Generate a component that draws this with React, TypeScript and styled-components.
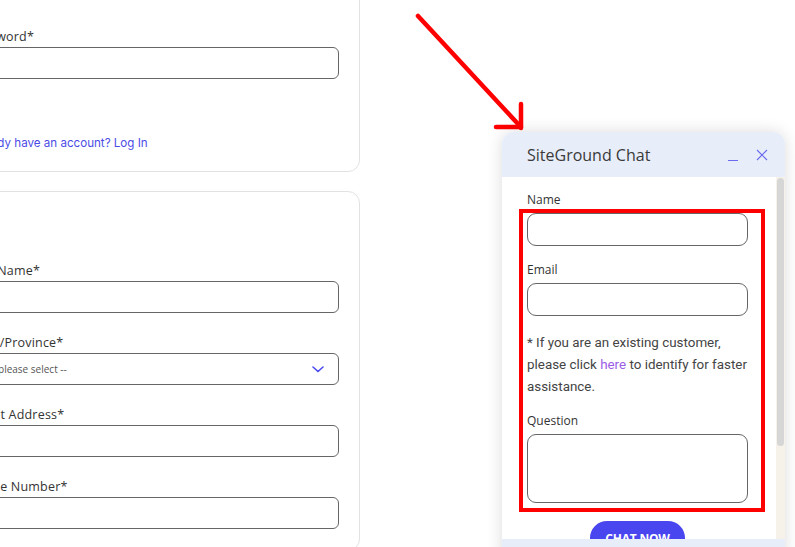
import styled, { createGlobalStyle } from 'styled-components';

const GlobalStyle = createGlobalStyle`
  html, body {
    margin: 0;
    padding: 0;
    background: #fff;
    overflow: hidden;
  }
  * {
    box-sizing: border-box;
  }
`;

const Page = styled.div`
  display: flex;
  width: 795px;
  height: 547px;
  overflow: hidden;
  font-family: 'Open Sans', 'Liberation Sans', sans-serif;
  color: #333;
`;

const LeftColumn = styled.div`
  display: flex;
  flex-direction: column;
  gap: 19px;
  width: 412px;
  margin-left: -52px;
  flex-shrink: 0;
`;

const Card = styled.div<{ $top: number; $pt: number; $pb: number }>`
  display: flex;
  flex-direction: column;
  margin-top: ${(p) => p.$top}px;
  padding: ${(p) => p.$pt}px 20px ${(p) => p.$pb}px 20px;
  border: 1px solid #e2e2e2;
  border-radius: 12px;
  background: #fff;
`;

const FieldList = styled.div`
  display: flex;
  flex-direction: column;
  gap: 21px;
`;

const Field = styled.div`
  display: flex;
  flex-direction: column;
  gap: 1px;
`;

const Label = styled.label`
  font-size: 12.5px;
  line-height: 18px;
  letter-spacing: 0.2px;
  color: #333;
`;

const TextBox = styled.div`
  display: flex;
  align-items: center;
  justify-content: space-between;
  height: 32px;
  border: 1px solid #666;
  border-radius: 6px;
  padding: 0 14px 0 19px;
  font-size: 10px;
  color: #555;
`;

const LoginLink = styled.a`
  margin-top: 55px;
  font-family: 'Inter', 'Liberation Sans', sans-serif;
  font-size: 11.6px;
  line-height: 18px;
  color: #4b4ce6;
  text-decoration: none;
`;

const RightArea = styled.div`
  position: relative;
  flex: 1;
  padding: 132px 0 0 142px;
`;

const Arrow = styled.svg`
  position: absolute;
  left: 0;
  top: 0;
  pointer-events: none;
`;

const Widget = styled.div`
  position: relative;
  display: flex;
  flex-direction: column;
  width: 283px;
  border-radius: 12px 12px 0 0;
  background: #fff;
  box-shadow: 0 0 16px rgba(0, 0, 0, 0.14);
  overflow: hidden;
`;

const WidgetHeader = styled.div`
  display: flex;
  align-items: center;
  justify-content: space-between;
  height: 45px;
  padding: 0 17px 0 25px;
  background: #e8eef9;
`;

const WidgetTitle = styled.h2`
  margin: 0;
  font-size: 16px;
  font-weight: 400;
  color: #3a3a3a;
`;

const HeaderIcons = styled.div`
  display: flex;
  align-items: center;
  gap: 17px;
`;

const WidgetBody = styled.div`
  display: flex;
  height: 362px;
  overflow: hidden;
`;

const FormArea = styled.div`
  flex: 1;
  display: flex;
  flex-direction: column;
  padding: 14px 28px 0 25px;
  & > * {
    flex-shrink: 0;
  }
`;

const ChatField = styled.div`
  display: flex;
  flex-direction: column;
  gap: 4px;
  margin-bottom: 15px;
`;

const ChatLabel = styled.label`
  font-size: 12px;
  line-height: 18px;
  color: #333;
`;

const ChatInput = styled.div<{ $h: number }>`
  height: ${(p) => p.$h}px;
  border: 1px solid #666;
  border-radius: 9px;
`;

const Notice = styled.p`
  margin: 1px 0 14px;
  font-family: Roboto, 'Liberation Sans', sans-serif;
  font-size: 13.4px;
  line-height: 22px;
  color: #444;
  a {
    color: #9b5de5;
    text-decoration: none;
  }
`;

const ChatButton = styled.button`
  align-self: center;
  margin-top: 3px;
  width: 95px;
  height: 34px;
  border: none;
  border-radius: 17px;
  background: #4a46ef;
  color: #fff;
  font-family: 'Open Sans', 'Liberation Sans', sans-serif;
  font-weight: 700;
  font-size: 12px;
  letter-spacing: -0.2px;
`;

const ScrollTrack = styled.div`
  width: 9px;
  background: #f6f1e9;
  padding: 1px 1px 0 1px;
`;

const ScrollThumb = styled.div`
  height: 268px;
  border-radius: 4px;
  background: #d6d6d6;
`;

const WidgetFooter = styled.div`
  height: 40px;
  background: #e8eef9;
`;

const Highlight = styled.div`
  position: absolute;
  left: 17px;
  top: 77px;
  width: 246px;
  height: 303px;
  border: 4px solid #ff0000;
  pointer-events: none;
`;

const Chevron = () => (
  <svg width="12" height="7" viewBox="0 0 12 7" fill="none">
    <path d="M1 1l5 4.5L11 1" stroke="#4a4af0" strokeWidth="1.6" strokeLinecap="round" />
  </svg>
);

const MinimizeIcon = () => (
  <svg width="12" height="12" viewBox="0 0 12 12" fill="none">
    <path d="M1 11.5h10" stroke="#6b6bf0" strokeWidth="1.2" />
  </svg>
);

const CloseIcon = () => (
  <svg width="12" height="12" viewBox="0 0 12 12" fill="none">
    <path d="M1 1l10 10M11 1L1 11" stroke="#6b6bf0" strokeWidth="1.2" />
  </svg>
);

const signupFields = [
  { label: 'Last Name*', select: false },
  { label: 'State/Province*', select: true },
  { label: 'Street Address*', select: false },
  { label: 'Phone Number*', select: false },
];

const App = () => {
  return (
    <>
      <GlobalStyle />
      <Page>
        <LeftColumn>
          <Card $top={-20} $pt={47} $pb={19}>
            <Field>
              <Label>Password*</Label>
              <TextBox />
            </Field>
            <LoginLink>Already have an account? Log In</LoginLink>
          </Card>
          <Card $top={0} $pt={70} $pb={21}>
            <FieldList>
              {signupFields.map((f) => (
                <Field key={f.label}>
                  <Label>{f.label}</Label>
                  <TextBox>
                    {f.select && (
                      <>
                        <span>-- please select --</span>
                        <Chevron />
                      </>
                    )}
                  </TextBox>
                </Field>
              ))}
            </FieldList>
          </Card>
        </LeftColumn>
        <RightArea>
          <Arrow width="200" height="140" viewBox="0 0 200 140">
            <g stroke="#ff0000" strokeWidth="4.5" strokeLinecap="round" fill="none">
              <path d="M58 16L159 125" />
              <path d="M161 104V128" />
              <path d="M136 127H161" />
            </g>
          </Arrow>
          <Widget>
            <WidgetHeader>
              <WidgetTitle>SiteGround Chat</WidgetTitle>
              <HeaderIcons>
                <MinimizeIcon />
                <CloseIcon />
              </HeaderIcons>
            </WidgetHeader>
            <WidgetBody>
              <FormArea>
                <ChatField>
                  <ChatLabel>Name</ChatLabel>
                  <ChatInput $h={33} />
                </ChatField>
                <ChatField>
                  <ChatLabel>Email</ChatLabel>
                  <ChatInput $h={33} />
                </ChatField>
                <Notice>
                  * If you are an existing customer, please click <a>here</a> to identify for
                  faster assistance.
                </Notice>
                <ChatField>
                  <ChatLabel>Question</ChatLabel>
                  <ChatInput $h={69} />
                </ChatField>
                <ChatButton>CHAT NOW</ChatButton>
              </FormArea>
              <ScrollTrack>
                <ScrollThumb />
              </ScrollTrack>
            </WidgetBody>
            <WidgetFooter />
            <Highlight />
          </Widget>
        </RightArea>
      </Page>
    </>
  );
};

export default App;
